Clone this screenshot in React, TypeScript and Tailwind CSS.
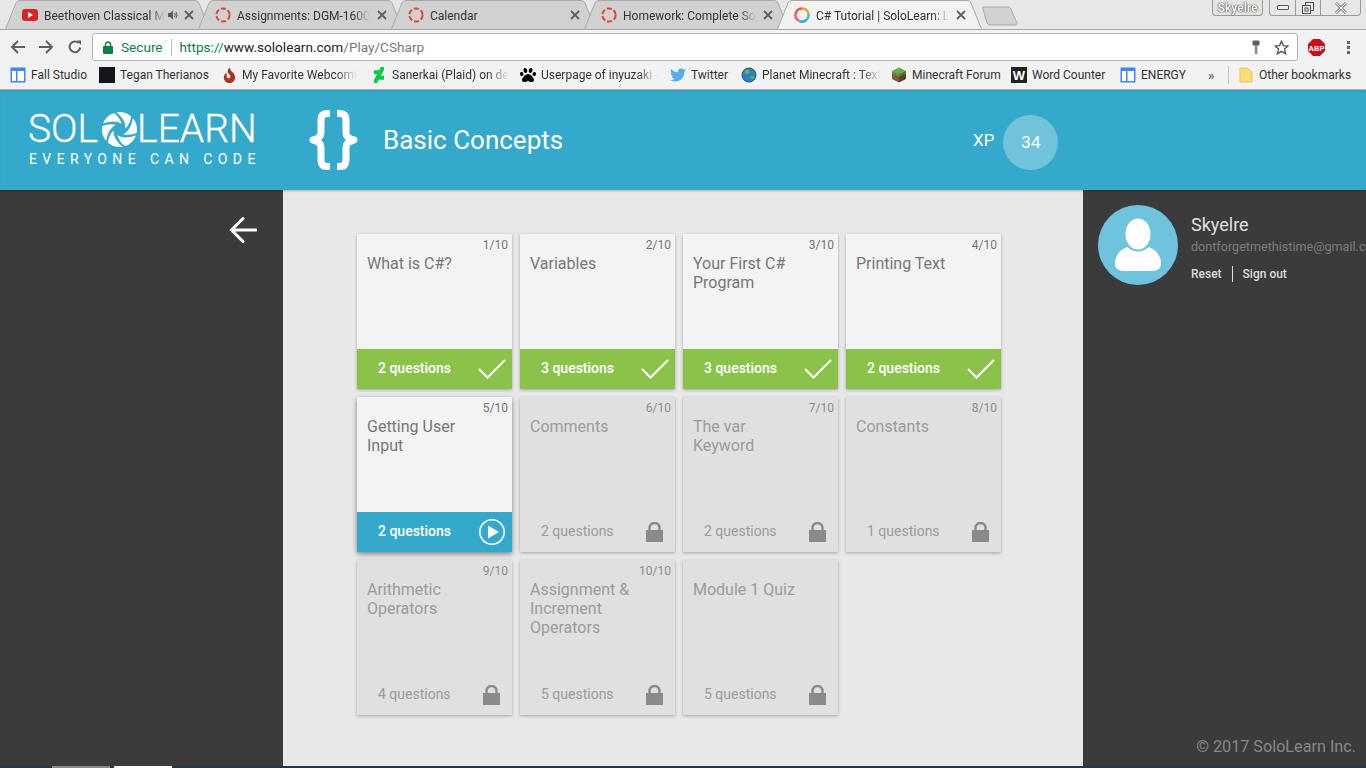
import { FaDeviantart, FaPaw, FaTwitter, FaFire } from "react-icons/fa";

const TABS = [
  { title: "Beethoven Classical M", icon: "yt", audio: true, fade: true },
  { title: "Assignments: DGM-1600", icon: "ring", fade: true },
  { title: "Calendar", icon: "ring" },
  { title: "Homework: Complete So", icon: "ring", fade: true },
  { title: "C# Tutorial | SoloLearn: L", icon: "solo", active: true, fade: true },
];

const LESSONS = [
  { title: "What is C#?", count: 2, state: "done" },
  { title: "Variables", count: 3, state: "done" },
  { title: "Your First C# Program", count: 3, state: "done" },
  { title: "Printing Text", count: 2, state: "done" },
  { title: "Getting User Input", count: 2, state: "current" },
  { title: "Comments", count: 2, state: "locked" },
  { title: "The var Keyword", count: 2, state: "locked" },
  { title: "Constants", count: 1, state: "locked" },
  { title: "Arithmetic Operators", count: 4, state: "locked" },
  { title: "Assignment & Increment Operators", count: 5, state: "locked" },
  { title: "Module 1 Quiz", count: 5, state: "locked", quiz: true },
];

function GridIcon() {
  return (
    <svg width="16" height="16" viewBox="0 0 16 16">
      <rect x="0.5" y="0.5" width="15" height="15" fill="#4285f4" />
      <rect x="2" y="4" width="12" height="10" fill="#fff" />
      <rect x="6" y="4" width="1.5" height="10" fill="#4285f4" />
    </svg>
  );
}

function Favicon({ kind }: { kind: string }) {
  if (kind === "yt") {
    return (
      <svg width="16" height="16" viewBox="0 0 16 16">
        <rect x="0" y="2" width="16" height="12" rx="3" fill="#d9252a" />
        <path d="M6 5 L11 8 L6 11 Z" fill="#fff" />
      </svg>
    );
  }
  if (kind === "ring") {
    return (
      <svg width="16" height="16" viewBox="0 0 16 16">
        <circle cx="8" cy="8" r="6.6" fill="none" stroke="#e53f35" strokeWidth="2" strokeDasharray="5 2.2" />
      </svg>
    );
  }
  return (
    <svg width="16" height="16" viewBox="0 0 16 16" fill="none" strokeWidth="2.6">
      <path d="M8 1.5 A6.5 6.5 0 0 1 14.2 6" stroke="#f0a13c" />
      <path d="M14.2 6 A6.5 6.5 0 0 1 12.5 12.7" stroke="#49c5b1" />
      <path d="M12.5 12.7 A6.5 6.5 0 0 1 5 13.8" stroke="#3fa7dc" />
      <path d="M5 13.8 A6.5 6.5 0 0 1 1.6 7" stroke="#ef5f88" />
      <path d="M1.6 7 A6.5 6.5 0 0 1 8 1.5" stroke="#e4574a" />
    </svg>
  );
}

function Tab({ title, icon, audio, active, fade }: { title: string; icon: string; audio?: boolean; active?: boolean; fade?: boolean }) {
  return (
    <div className={`relative w-[193px] h-[29px] shrink-0 ${active ? "z-10" : ""}`}>
      <svg width="205" height="29" viewBox="0 0 205 29" className="absolute left-0 top-0">
        <path
          d="M0.5 29 L11 3 Q12 0.5 15 0.5 H190 Q193 0.5 194 3 L204.5 29"
          fill={active ? "#f2f2f2" : "#d1d1d1"}
          stroke="#a9a9a9"
        />
      </svg>
      <div className="relative flex items-center h-[29px] pl-[17px] pt-[1px]">
        <Favicon kind={icon} />
        <div className={`ml-[6px] shrink-0 ${audio ? "w-[122px]" : "w-[135px]"}`}>
          <span
            className={`inline-block whitespace-nowrap text-[12px] text-[#333] ${
              fade ? "[mask-image:linear-gradient(to_right,black_88%,transparent)]" : ""
            }`}
          >
            {title}
          </span>
        </div>
        {audio && (
          <svg width="12" height="12" viewBox="0 0 12 12" className="ml-[1px] shrink-0">
            <path d="M1 4 H3 L6 1.5 V10.5 L3 8 H1 Z" fill="#5a5a5a" />
            <path d="M7.5 4 Q9 6 7.5 8 M9 2.8 Q11 6 9 9.2" fill="none" stroke="#5a5a5a" />
          </svg>
        )}
        <svg width="10" height="10" viewBox="0 0 10 10" className="shrink-0 ml-[5px]">
          <path d="M1 1 L9 9 M9 1 L1 9" stroke="#5f5f5f" strokeWidth="1.8" />
        </svg>
      </div>
    </div>
  );
}

function GrassBlock() {
  return (
    <svg width="16" height="16" viewBox="0 0 16 16">
      <path d="M8 0.5 L15 4 L8 7.5 L1 4 Z" fill="#6aa84a" />
      <path d="M1 4 L8 7.5 V15.5 L1 12 Z" fill="#7f5a3a" />
      <path d="M15 4 L8 7.5 V15.5 L15 12 Z" fill="#5f4029" />
      <path d="M1 4 L8 7.5 V10 L1 6.5 Z" fill="#5d9440" />
      <path d="M15 4 L8 7.5 V10 L15 6.5 Z" fill="#4c7c34" />
    </svg>
  );
}

function Globe() {
  return (
    <svg width="16" height="16" viewBox="0 0 16 16">
      <circle cx="8" cy="8" r="7" fill="#2f7fc4" stroke="#1f4f78" strokeWidth="1" />
      <path d="M4 3 Q8 2 9 5 Q7 8 5 7 Q3 6 4 3 M9 9 Q13 8 13 11 Q10 14 9 9" fill="#6cb33f" />
    </svg>
  );
}

const BOOKMARKS = [
  { w: 89, label: "Fall Studio", icon: <GridIcon /> },
  { w: 122, label: "Tegan Therianos", icon: <span className="block w-4 h-4 bg-[#15151c]" /> },
  { w: 150, label: "My Favorite Webcomi", fade: true, icon: <FaFire className="text-[#a8341c] text-[15px]" /> },
  { w: 149, label: "Sanerkai (Plaid) on de", fade: true, icon: <FaDeviantart className="text-[#05cc47] text-[16px]" /> },
  { w: 150, label: "Userpage of inyuzaki -", fade: true, icon: <FaPaw className="text-black text-[16px]" /> },
  { w: 71, label: "Twitter", icon: <FaTwitter className="text-[#55acee] text-[16px]" /> },
  { w: 150, label: "Planet Minecraft : Text", fade: true, icon: <Globe /> },
  { w: 120, label: "Minecraft Forum", icon: <GrassBlock /> },
  {
    w: 109,
    label: "Word Counter",
    icon: (
      <span className="flex items-center justify-center w-4 h-4 bg-[#222] text-white text-[13px] font-bold leading-none font-['Liberation_Sans',sans-serif]">
        W
      </span>
    ),
  },
  { w: 84, label: "ENERGY", icon: <GridIcon /> },
];

function Swirl() {
  return (
    <svg width="35" height="35" viewBox="-18 -18 36 36" className="shrink-0 ml-[4px]">
      {[0, 60, 120, 180, 240, 300].map((deg) => (
        <path
          key={deg}
          transform={`rotate(${deg})`}
          d="M-3.2 -17.7 A18 18 0 0 1 12 -13.4 Q11 -6 6.2 -1 Q6.5 -10 -3.2 -17.7 Z"
          fill="#fff"
        />
      ))}
    </svg>
  );
}

function Check() {
  return (
    <svg width="28" height="20" viewBox="0 0 28 20" fill="none">
      <path d="M1 10 L9.5 18.5 L27 1" stroke="#fff" strokeWidth="2" />
    </svg>
  );
}

function Play() {
  return (
    <svg width="26" height="26" viewBox="0 0 26 26">
      <circle cx="13" cy="13" r="12.2" fill="none" stroke="#fff" strokeWidth="1.5" />
      <path d="M9 6.5 L20 13 L9 19.5 Z" fill="#fff" />
    </svg>
  );
}

function Lock() {
  return (
    <svg width="17" height="20" viewBox="0 0 17 20">
      <rect x="0" y="8" width="17" height="12" fill="#8a8a8a" />
      <path d="M3.5 9 V6 A5 5 0 0 1 13.5 6 V9" fill="none" stroke="#8a8a8a" strokeWidth="2.4" />
    </svg>
  );
}

function LessonCard({ title, count, state, index, quiz }: { title: string; count: number; state: string; index: number; quiz?: boolean }) {
  const locked = state === "locked";
  return (
    <div
      className={`flex flex-col h-[155px] ${
        locked ? "bg-[#e0e0e0]" : "bg-[#f3f3f3]"
      } ${state === "current" ? "shadow-[0_2px_5px_rgba(0,0,0,0.45)]" : "shadow-[0_1px_3px_rgba(0,0,0,0.3)]"}`}
    >
      <div className={`h-[18px] pt-[4px] pr-[4px] text-right text-[12px] leading-[14px] ${locked ? "text-[#8c8c8c]" : "text-[#757575]"}`}>
        {!quiz && `${index}/10`}
      </div>
      <div className={`flex-1 mt-[2px] pl-[10px] pr-[30px] text-[16px] leading-[19px] ${locked ? "text-[#9b9b9b]" : "text-[#777]"}`}>
        {title}
      </div>
      <div
        className={`flex items-center justify-between h-[40px] pl-[21px] text-[14px] ${
          state === "done"
            ? "bg-[#8bc34a] text-white pr-[6px] font-medium"
            : state === "current"
              ? "bg-[#35a9cc] text-white pr-[7px] font-medium"
              : "text-[#9b9b9b] pr-[12px]"
        }`}
      >
        <span className="-mt-[2px]">{count} questions</span>
        {state === "done" && <Check />}
        {state === "current" && <Play />}
        {locked && <Lock />}
      </div>
    </div>
  );
}

export default function App() {
  return (
    <div className="flex flex-col w-[1366px] h-[768px] overflow-hidden bg-[#3b3b3b] font-['Roboto',sans-serif]">
      <div className="shrink-0 bg-[#f2f2f2]">
        {/* tab strip */}
        <div className="relative flex h-[29px] pl-[5px] bg-[#e7e7e7] border-b border-[#a9a9a9] box-content -mb-px">
          {TABS.map((t) => (
            <Tab key={t.title} {...t} />
          ))}
          <svg width="36" height="20" viewBox="0 0 36 20" className="mt-[6px] ml-[12px]">
            <path d="M1 1 H26 Q28 1 29 3 L35 17 Q35.5 19 33 19 H8 Q6 19 5 17 L1 3 Q0.5 1 1 1 Z" fill="#d1d1d1" stroke="#a9a9a9" />
          </svg>
          <div className="absolute right-[103px] top-0 flex items-center justify-center w-[51px] h-[16px] rounded-b-[4px] border border-t-0 border-[#9a9a9a] bg-[#e2e2e2] text-[12px] font-bold text-[#f0f0f0] [text-shadow:0_0_1px_#333,0_0_1px_#333]">
            Skyelre
          </div>
          <div className="absolute left-[1269px] right-[5px] top-0 flex h-[16px] rounded-b-[4px] border border-t-0 border-[#9a9a9a]">
            <div className="flex items-center justify-center w-[26px] border-r border-[#9a9a9a]">
              <span className="block w-[12px] h-[5px] rounded-[1px] border border-[#555] bg-[#eee]" />
            </div>
            <div className="flex items-center justify-center w-[25px] border-r border-[#9a9a9a]">
              <svg width="12" height="12" viewBox="0 0 12 12" fill="none" stroke="#555">
                <rect x="3.5" y="0.5" width="8" height="8" />
                <rect x="0.5" y="3.5" width="8" height="8" fill="#eee" />
                <rect x="3" y="6" width="3" height="3" />
              </svg>
            </div>
            <div className="flex flex-1 items-center justify-center">
              <svg width="14" height="12" viewBox="0 0 14 12">
                <path d="M2 1 L12 11 M12 1 L2 11" stroke="#666" strokeWidth="2.6" />
                <path d="M2 1 L12 11 M12 1 L2 11" stroke="#eee" strokeWidth="1.2" />
              </svg>
            </div>
          </div>
        </div>

        {/* toolbar */}
        <div className="flex items-center h-[33px] pt-[3px]">
          <div className="flex items-center w-[92px] pl-[10px] gap-[14px]">
            <svg width="15" height="14" viewBox="0 0 15 14" fill="none" stroke="#5f5f5f" strokeWidth="2">
              <path d="M15 7 H2 M8 1 L2 7 L8 13" />
            </svg>
            <svg width="15" height="14" viewBox="0 0 15 14" fill="none" stroke="#5f5f5f" strokeWidth="2">
              <path d="M0 7 H13 M7 1 L13 7 L7 13" />
            </svg>
            <svg width="14" height="14" viewBox="0 0 14 14" fill="none" stroke="#5f5f5f" strokeWidth="2">
              <path d="M12.2 7.5 A5.3 5.3 0 1 1 10.6 3" />
              <path d="M9 0.5 H13 V5 Z" fill="#5f5f5f" stroke="none" />
            </svg>
          </div>
          <div className="flex items-center w-[1206px] h-[28px] rounded-[3px] border border-[#b4b4b4] bg-white text-[13.6px] pl-[10px] pr-[8px]">
            <svg width="10" height="13" viewBox="0 0 10 13" className="shrink-0">
              <rect x="0" y="5" width="10" height="8" rx="1" fill="#0b8043" />
              <path d="M2.5 6 V3.5 A2.5 2.5 0 0 1 7.5 3.5 V6" fill="none" stroke="#0b8043" strokeWidth="1.5" />
            </svg>
            <span className="ml-[8px] text-[#0b8043]">Secure</span>
            <span className="ml-[8px] w-px h-[17px] bg-[#bdbdbd]" />
            <span className="ml-[8px] whitespace-nowrap text-[#777]">
              <span className="text-[#0b8043]">https://</span>
              <span className="text-[#222]">www.sololearn.com</span>/Play/CSharp
            </span>
            <div className="flex items-center gap-[14px] ml-auto">
              <svg width="8" height="15" viewBox="0 0 8 15">
                <rect x="0.5" y="0.5" width="7" height="5" rx="1" fill="#5f5f5f" />
                <rect x="2.8" y="5" width="2.6" height="9" fill="#8a8a8a" />
              </svg>
              <svg width="15" height="15" viewBox="0 0 15 15" fill="none" stroke="#555" strokeWidth="1.4">
                <path d="M7.5 1.2 L9.4 5.6 L14 6 L10.5 9.1 L11.6 13.8 L7.5 11.3 L3.4 13.8 L4.5 9.1 L1 6 L5.6 5.6 Z" />
              </svg>
            </div>
          </div>
          <div className="flex items-center justify-center w-[36px]">
            <svg width="17" height="17" viewBox="0 0 17 17">
              <path d="M5 0 H12 L17 5 V12 L12 17 H5 L0 12 V5 Z" fill="#c8101a" />
              <text x="8.5" y="11.5" textAnchor="middle" fontSize="7.5" fontWeight="700" fill="#fff" fontFamily="Liberation Sans">
                ABP
              </text>
            </svg>
          </div>
          <div className="flex flex-col items-center gap-[2px] w-[28px]">
            <span className="block w-[3px] h-[3px] bg-[#666]" />
            <span className="block w-[3px] h-[3px] bg-[#666]" />
            <span className="block w-[3px] h-[3px] bg-[#666]" />
          </div>
        </div>

        {/* bookmarks bar */}
        <div className="flex items-center h-[28px] pb-[1px] pl-[10px] text-[12px] text-[#333] border-b border-[#b4b4b4]">
          {BOOKMARKS.map((b) => (
            <div key={b.label} className="flex items-center shrink-0 gap-[5px]" style={{ width: b.w }}>
              <span className="flex items-center justify-center w-4 h-4 shrink-0">{b.icon}</span>
              <span
                className={`whitespace-nowrap ${
                  b.fade ? "[mask-image:linear-gradient(to_right,black_82%,transparent)]" : ""
                }`}
              >
                {b.label}
              </span>
            </div>
          ))}
          <span className="ml-[4px] w-[20px] text-[13px] text-[#666] font-bold leading-none">»</span>
          <span className="w-px h-[18px] bg-[#c8c8c8]" />
          <svg width="14" height="16" viewBox="0 0 14 16" className="ml-[10px]">
            <path d="M1 1 H8 L13 5 V15 H1 Z" fill="#fbdc7a" stroke="#e8c65a" />
          </svg>
          <span className="ml-[6px] whitespace-nowrap">Other bookmarks</span>
        </div>
      </div>

      {/* site header */}
      <header className="relative z-10 flex items-center shrink-0 h-[100px] pl-[29px] bg-[#35a9cc] text-white shadow-[0_1px_2px_rgba(0,0,0,0.25),inset_0_2px_2px_rgba(0,0,0,0.07)]">
        <div className="flex flex-col w-[229px] -mt-[2px]">
          <div className="flex items-center h-[36px] text-[39px] font-light leading-none [-webkit-text-stroke:0.3px_white]">
            <span className="-ml-[1px]">SOL</span>
            <Swirl />
            <span>LEARN</span>
          </div>
          <div className="mt-[4px] whitespace-nowrap text-[14px] leading-[16px] tracking-[5.4px]">EVERYONE CAN CODE</div>
        </div>
        <svg width="50" height="60" viewBox="0 0 50 60" fill="none" stroke="#fff" strokeWidth="7" strokeLinejoin="round" className="ml-[51px] shrink-0">
          <path d="M21 3.5 H18 Q12 3.5 12 10 V23 Q12 28 4 30 Q12 32 12 37 V50 Q12 56.5 18 56.5 H21" />
          <path d="M28 3.5 H31 Q37 3.5 37 10 V23 Q37 28 45 30 Q37 32 37 37 V50 Q37 56.5 31 56.5 H28" />
        </svg>
        <h1 className="ml-[24px] w-[590px] text-[26px] font-normal">Basic Concepts</h1>
        <span className="mt-[1px] text-[17px]">XP</span>
        <span className="flex items-center justify-center ml-[9px] mt-[4px] w-[55px] h-[55px] rounded-full bg-[#71c3db] text-[17px] pt-[1px]">
          34
        </span>
      </header>

      <div className="flex flex-1 min-h-0">
        <aside className="shrink-0 w-[283px] pt-[26px] pl-[229px]">
          <svg width="28" height="28" viewBox="0 0 28 28" fill="none" stroke="#fff" strokeWidth="3" strokeLinecap="round">
            <path d="M27 14 H3 M14 2.5 L2.5 14 L14 25.5" />
          </svg>
        </aside>

        <main className="shrink-0 w-[800px] pt-[44px] pl-[74px] bg-[#e8e8e8]">
          <div className="grid grid-cols-[repeat(4,155px)] gap-[8px]">
            {LESSONS.map((l, i) => (
              <LessonCard key={l.title} index={i + 1} {...l} />
            ))}
          </div>
        </main>

        <aside className="flex flex-col flex-1 min-w-0 pt-[15px] pl-[15px] overflow-hidden">
          <div className="flex">
            <div className="flex items-end justify-center shrink-0 w-[80px] h-[80px] rounded-full bg-[#6fc3dc]">
              <svg width="48" height="54" viewBox="0 0 48 54" className="mb-[13px]">
                <ellipse cx="24" cy="16" rx="12.5" ry="15.5" fill="#fff" />
                <path d="M13 29 Q24 38 35 29 Q47 34 47 46 Q47 53 38 53 H10 Q1 53 1 46 Q1 34 13 29 Z" fill="#fff" />
              </svg>
            </div>
            <div className="ml-[13px] pt-[9px] whitespace-nowrap">
              <div className="text-[18px] leading-[22px] text-[#e0e0e0]">Skyelre</div>
              <div className="mt-[2px] text-[12.6px] leading-[18px] text-[#7d7d7d]">dontforgetmethistime@gmail.com</div>
              <div className="flex items-center mt-[10px] text-[12px] font-medium leading-[16px] text-[#dedede]">
                <span>Reset</span>
                <span className="mx-[10px] w-px h-[16px] bg-[#dedede]" />
                <span>Sign out</span>
              </div>
            </div>
          </div>
          <div className="mt-auto mb-[7px] pr-[10px] text-right text-[16.2px] text-[#888]">© 2017 SoloLearn Inc.</div>
        </aside>
      </div>

      {/* windows taskbar edge */}
      <div className="flex shrink-0 h-[2px] pl-[52px] bg-[#24364a]">
        <span className="w-[58px] bg-[#8c8c8c]" />
        <span className="ml-[4px] w-[58px] bg-white" />
      </div>
    </div>
  );
}
